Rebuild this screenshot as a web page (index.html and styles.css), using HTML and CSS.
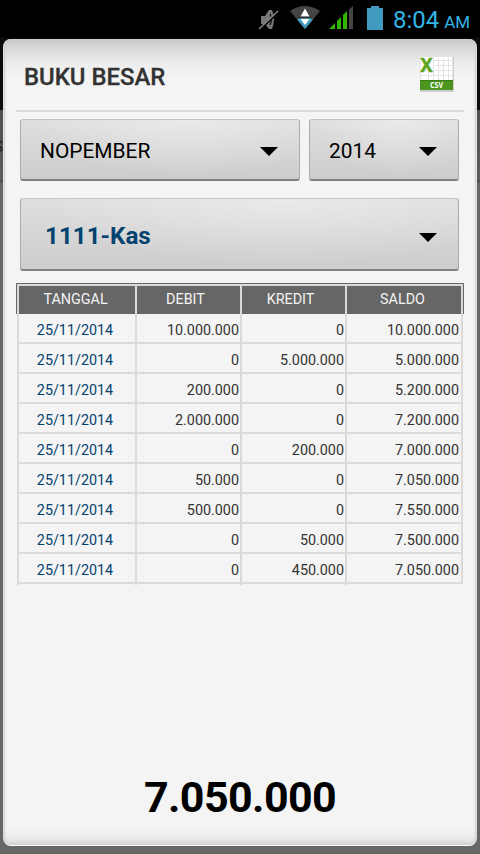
FILE: index.html
```
<!DOCTYPE html>
<html lang="id">
<head>
    <meta charset="UTF-8">
    <title>Buku Besar</title>
    <link rel="stylesheet" href="styles.css">
</head>
<body>
<div class="statusbar">
    <svg class="mute" width="20" height="22" viewBox="0 0 20 22">
        <path d="M2 7h4l4-6h3q4 9 0 19h-3l-4-5H2z" fill="#777"/>
        <path d="M11 5q3 5 0 11" fill="none" stroke="#000" stroke-width="1.2"/>
        <path d="M0 21.500L19 3.500" stroke="#000" stroke-width="2"/>
        <path d="M0 20L19 2" stroke="#888" stroke-width="1.4"/>
    </svg>
    <svg class="wifi" width="30" height="23" viewBox="0 0 30 23">
        <path d="M0 5Q15-5 30 5L15 23z" fill="#444"/>
        <path d="M7 13.5Q15 8 23 13.5L15 23z" fill="#419bc1"/>
        <path d="M15 2.500l4.500 8h-9zM15 19l-4.500-6h9z" fill="#fff"/>
        <path d="M8 11.500h14" stroke="#333" stroke-width="1.5"/>
    </svg>
    <svg class="signal" width="24" height="23" viewBox="0 0 24 23">
        <path d="M0 23l6-6v6zM8 23v-8l4-4v12zM14 23V9l4-4v18z" fill="#33b500"/>
        <path d="M20 23V3.500l4-3.500v23z" fill="#444"/>
    </svg>
    <svg class="battery" width="16" height="24" viewBox="0 0 16 24">
        <path d="M0 2h4V0h8v2h4v22H0z" fill="#419bc1"/>
    </svg>
    <div class="clock">8:04 <small>AM</small></div>
</div>

<div class="page">
    <div class="behind">S</div>
    <div class="dialog">
        <div class="title">
            <h1>BUKU BESAR</h1>
            <svg class="csv" width="36" height="38" viewBox="0 0 36 38">
                <rect x="1" y="1" width="34" height="35" rx="1" fill="#ccc"/>
                <rect x="1.500" y="1" width="32" height="33" fill="#fff"/>
                <path d="M14 4.500h19M14 9.500h19M2 14.500h31M2 19.500h31M9.500 16v8M14.500 2v22M19.500 2v22M24.500 2v22M29.500 2v22" stroke="#e4e4e4"/>
                <rect x="1" y="24" width="33" height="10" fill="#4c961d"/>
                <path d="M1 24.500h33" stroke="#3b7b14"/>
                <text class="csv-x" x="1.500" y="15.500" textLength="12" lengthAdjust="spacingAndGlyphs">X</text>
                <text class="csv-label" x="11" y="31.500" textLength="13" lengthAdjust="spacingAndGlyphs">CSV</text>
            </svg>
        </div>

        <div class="filter">
            <div class="spinner month"><span>NOPEMBER</span><i class="arrow"></i></div>
            <div class="spinner year"><span>2014</span><i class="arrow"></i></div>
        </div>
        <div class="spinner account"><span>1111-Kas</span><i class="arrow"></i></div>

        <div class="ledger">
            <div class="head">
                <div class="row"><span>TANGGAL</span><span>DEBIT</span><span>KREDIT</span><span>SALDO</span></div>
            </div>
            <div class="body">
                <div class="row"><span>25/11/2014</span><span>10.000.000</span><span>0</span><span>10.000.000</span></div>
                <div class="row"><span>25/11/2014</span><span>0</span><span>5.000.000</span><span>5.000.000</span></div>
                <div class="row"><span>25/11/2014</span><span>200.000</span><span>0</span><span>5.200.000</span></div>
                <div class="row"><span>25/11/2014</span><span>2.000.000</span><span>0</span><span>7.200.000</span></div>
                <div class="row"><span>25/11/2014</span><span>0</span><span>200.000</span><span>7.000.000</span></div>
                <div class="row"><span>25/11/2014</span><span>50.000</span><span>0</span><span>7.050.000</span></div>
                <div class="row"><span>25/11/2014</span><span>500.000</span><span>0</span><span>7.550.000</span></div>
                <div class="row"><span>25/11/2014</span><span>0</span><span>50.000</span><span>7.500.000</span></div>
                <div class="row"><span>25/11/2014</span><span>0</span><span>450.000</span><span>7.050.000</span></div>
            </div>
        </div>

        <div class="total">7.050.000</div>
    </div>
</div>
</body>
</html>
```

FILE: styles.css
```
* {
    margin: 0;
    padding: 0;
    box-sizing: border-box;
}

body {
    width: 480px;
    height: 854px;
    overflow: hidden;
    background: #666;
    font-family: Roboto, "Liberation Sans", sans-serif;
    display: flex;
    flex-direction: column;
}

/* status bar */
.statusbar {
    height: 38px;
    padding-right: 10px;
    background: #000;
    display: flex;
    justify-content: flex-end;
    align-items: flex-start;
}
.mute {
    margin: 9px 11px 0 0;
}
.wifi {
    margin: 6px 9px 0 0;
}
.signal {
    margin: 6px 14px 0 0;
}
.battery {
    margin: 6px 10px 0 0;
}
.clock {
    width: 77px;
    color: #33b5e5;
    font-size: 24px;
    line-height: 40px;
    white-space: nowrap;
}
.clock small {
    font-size: 17px;
    margin-left: -1px;
}

/* dimmed activity behind the dialog */
.page {
    flex: 1;
    padding: 1px 3px 8px;
    position: relative;
    background: linear-gradient(#0c0c0c 72px, #505050 72px, #5c5c5c 142px, #4c4c4c 142px, #4c4c4c 144px, #666 144px);
}
.behind {
    position: absolute;
    left: -7px;
    top: 98px;
    font-size: 17px;
    color: #222;
}

.dialog {
    position: relative;
    height: 807px;
    padding: 0 13px;
    border: 1px solid #e2e2e2;
    border-width: 0 1px 1px;
    border-bottom-color: #fff;
    border-radius: 8px;
    background: linear-gradient(#c9c9c9, #d6d6d6 8px, #ededed 24px, #f4f4f4 38px, #f4f4f4 788px, #ececec 799px, #d4d4d4);
    box-shadow: inset 1px 0 2px #ccc, inset -1px 0 2px #ccc;
    display: flex;
    flex-direction: column;
}
.title {
    height: 73px;
    margin: 0 -1px;
    padding: 0 9px 0 8px;
    border-bottom: 2px solid #dadada;
    display: flex;
    justify-content: space-between;
}
.title h1 {
    font-size: 23.900px;
    font-weight: 500;
    line-height: 77px;
    color: #333;
    -webkit-text-stroke: 0.3px #333;
}
.csv {
    margin-top: 17px;
}
.csv-x {
    font: bold 20px "Open Sans", sans-serif;
    fill: #5ea51d;
    stroke: #5ea51d;
    stroke-width: 0.6px;
}
.csv-label {
    font: bold 8px "Open Sans", sans-serif;
    fill: #fff;
}

/* dropdowns */
.filter {
    display: flex;
    gap: 9px;
    margin: 7px 0 17px 3px;
}
.spinner {
    height: 62px;
    padding: 2px 21px 0 19px;
    border: 1px solid #aaa;
    border-top-color: #c4c4c4;
    border-bottom: 2px solid #808080;
    border-radius: 3px;
    background: radial-gradient(ellipse at 60% 0, rgba(255,255,255,.35), rgba(255,255,255,0) 65%), linear-gradient(#dfdfdf, #cdcdcd);
    display: flex;
    justify-content: space-between;
    align-items: center;
    font-size: 20.900px;
    color: #000;
}
.month {
    width: 280px;
}
.year {
    width: 150px;
}
.account {
    width: 439px;
    height: 73px;
    margin-left: 3px;
    padding: 4px 21px 0 24px;
    font-size: 24.200px;
    font-weight: 700;
    color: #04426f;
}
.arrow {
    margin-top: 2px;
    border: 9px solid transparent;
    border-top-color: #000;
    border-bottom: 0;
}

/* ledger table */
.ledger {
    width: 448px;
    margin: 12px 0 0 -1px;
    font-size: 14.350px;
    color: #333;
}
.head {
    border: 1px solid #666;
    border-bottom: 0;
}
.row {
    display: grid;
    grid-template-columns: 118px 105px 105px 118px;
    height: 30px;
    text-align: right;
}
.row span {
    height: 30px;
    border-left: 2px solid #dadada;
}
.row span:last-child {
    border-right: 2px solid #dadada;
}
.head .row {
    border-top: 2px solid #dadada;
    background: #666;
    color: #f4f4f4;
    text-align: center;
    line-height: 28px;
}
.head .row span {
    height: 28px;
    padding-right: 3px;
}
.head .row span:nth-child(2),
.head .row span:nth-child(3) {
    padding-right: 6px;
}
/* column lines run 1px past the last row */
.body {
    margin: 0 1px;
    padding-bottom: 1px;
    background: linear-gradient(90deg, #dadada 2px, transparent 2px 118px, #dadada 118px 120px, transparent 120px 223px, #dadada 223px 225px, transparent 225px 328px, #dadada 328px 330px, transparent 330px) 0 100% / 100% 1px no-repeat;
}
.body span {
    border-bottom: 2px solid #dadada;
    padding-right: 1px;
    line-height: 34px;
}
.body span:first-child {
    padding-right: 4px;
    color: #04426f;
    text-align: center;
}
.body span:last-child {
    padding-right: 2px;
}

.total {
    margin-top: auto;
    height: 96px;
    text-align: center;
    font-size: 43px;
    font-weight: 700;
    letter-spacing: -0.6px;
    line-height: 97px;
    color: #000;
}
```
